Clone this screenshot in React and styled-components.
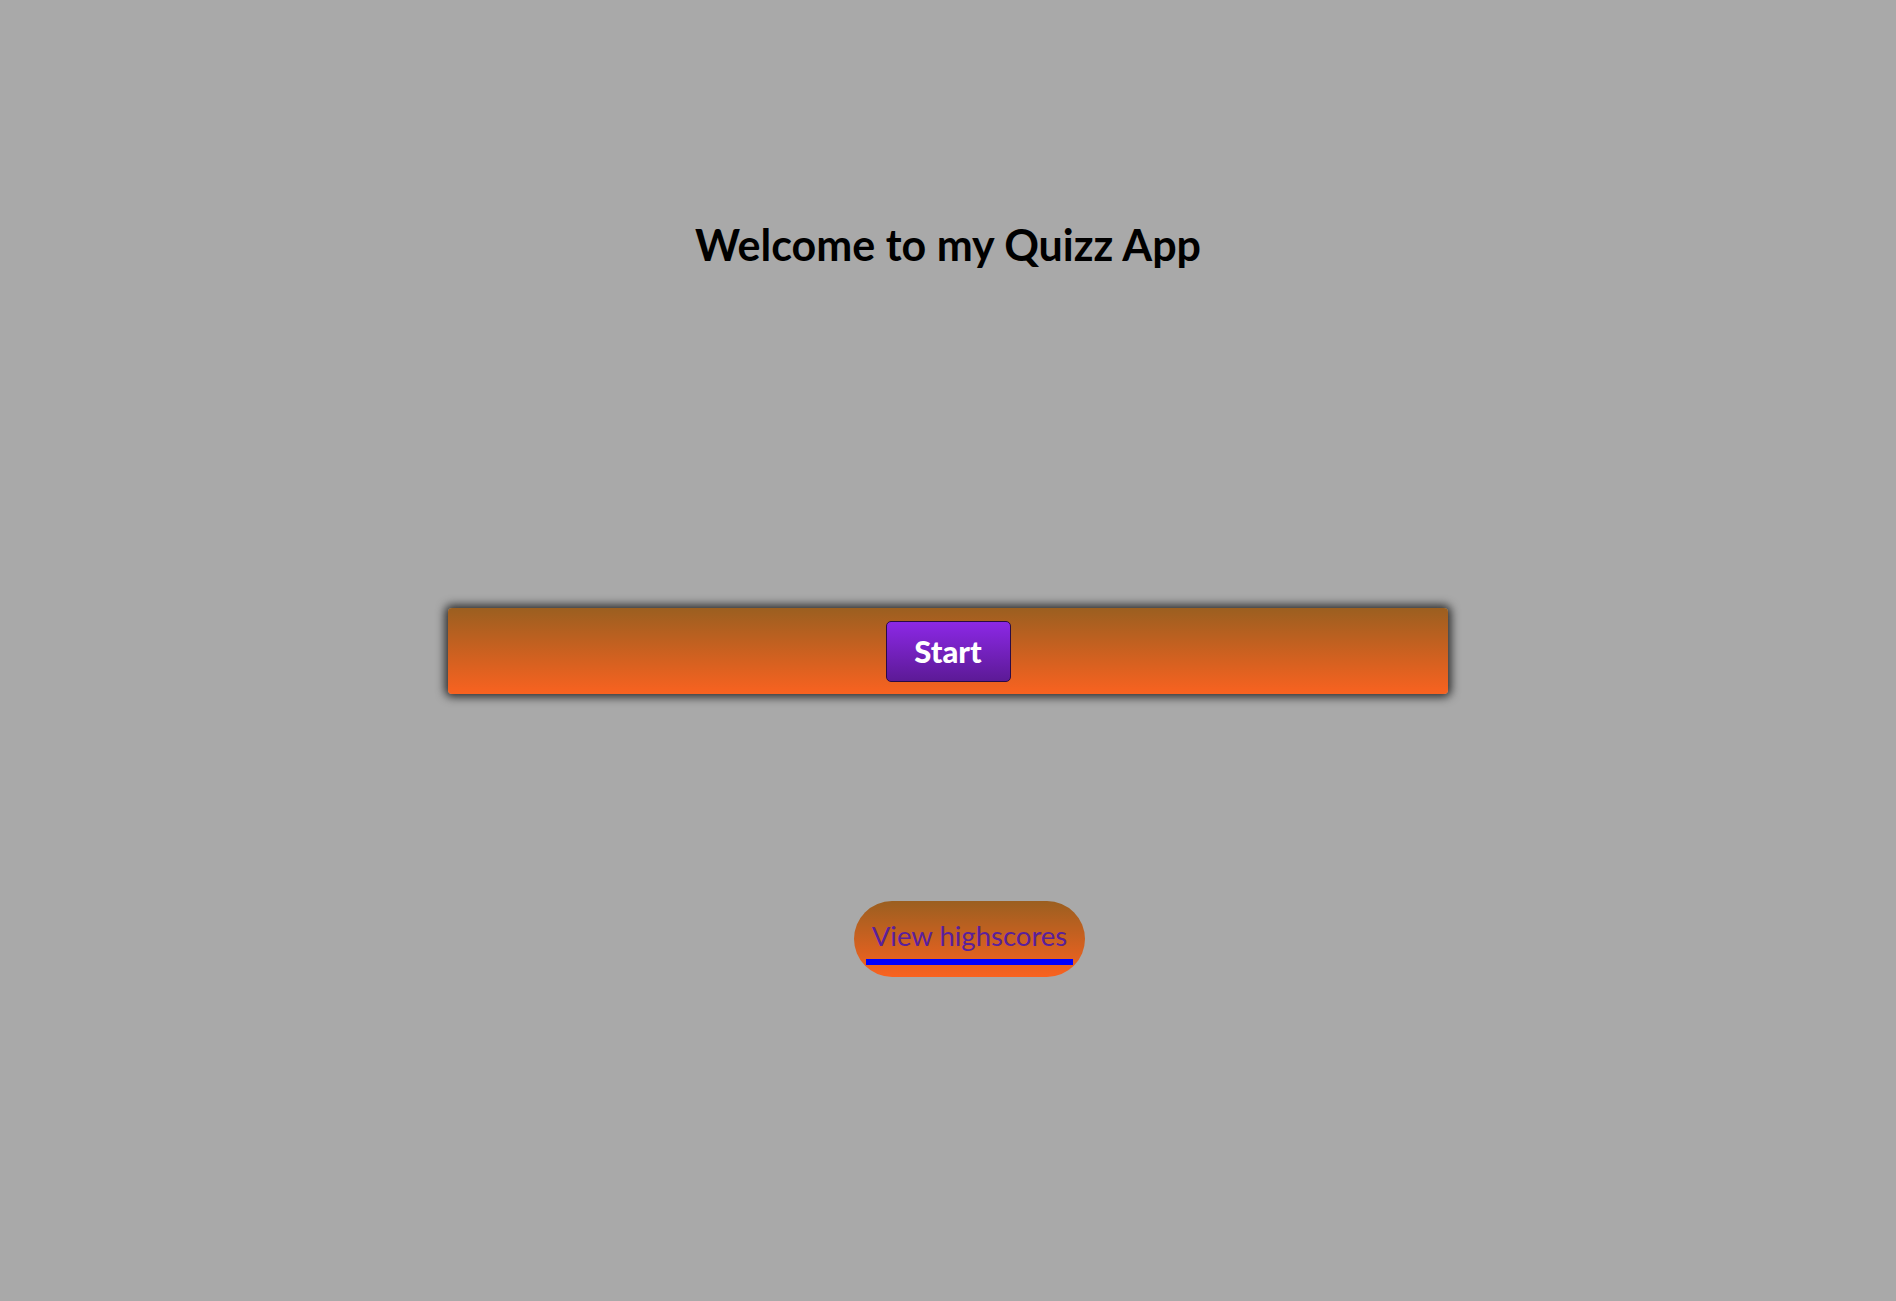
import React from "react";
import styled, { createGlobalStyle } from "styled-components";

const GlobalStyle = createGlobalStyle`
  html, body { margin: 0; padding: 0; }
  body {
    background: #a9a9a9;
    font-family: Lato, "Open Sans", sans-serif;
    min-height: 1301px;
  }
`;

const Page = styled.main`
  display: flex;
  flex-direction: column;
  align-items: center;
  padding-top: 218px;
`;

const Title = styled.h1`
  margin: 0;
  font-size: 43px;
  font-weight: 700;
  color: #000;
  line-height: 54px;
`;

const Bar = styled.section`
  margin-top: 336px;
  width: 1000px;
  height: 86px;
  box-sizing: border-box;
  display: flex;
  align-items: center;
  justify-content: center;
  border-radius: 4px;
  background: linear-gradient(to bottom, #9b5f20, #f96220);
  box-shadow: 0 0 10px 3px rgba(0, 0, 0, 0.75);
`;

const StartButton = styled.button`
  width: 125px;
  height: 61px;
  border: 1px solid #2a0b45;
  border-radius: 5px;
  background: linear-gradient(to bottom, #8c28e6, #5c1a96);
  color: #fff;
  font-family: Lato, sans-serif;
  font-weight: 900;
  font-size: 31px;
  padding: 0;
  cursor: pointer;
`;

const Pill = styled.div`
  margin-top: 207px;
  margin-left: 43px;
  width: 231px;
  height: 76px;
  box-sizing: border-box;
  border-radius: 38px;
  background: linear-gradient(to bottom, #9b5f20, #f96220);
  display: flex;
  align-items: center;
  justify-content: center;
`;

const Link = styled.a`
  color: #5a1f9c;
  text-decoration: none;
  font-size: 27.5px;
  line-height: 34px;
  padding: 0 6px 6px;
  border-bottom: 6px solid #0000ff;
  margin-top: 5px;
`;

export default function App() {
  return (
    <>
      <GlobalStyle />
      <Page>
        <Title>Welcome to my Quizz App</Title>
        <Bar>
          <StartButton>Start</StartButton>
        </Bar>
        <Pill>
          <Link href="#">View highscores</Link>
        </Pill>
      </Page>
    </>
  );
}
